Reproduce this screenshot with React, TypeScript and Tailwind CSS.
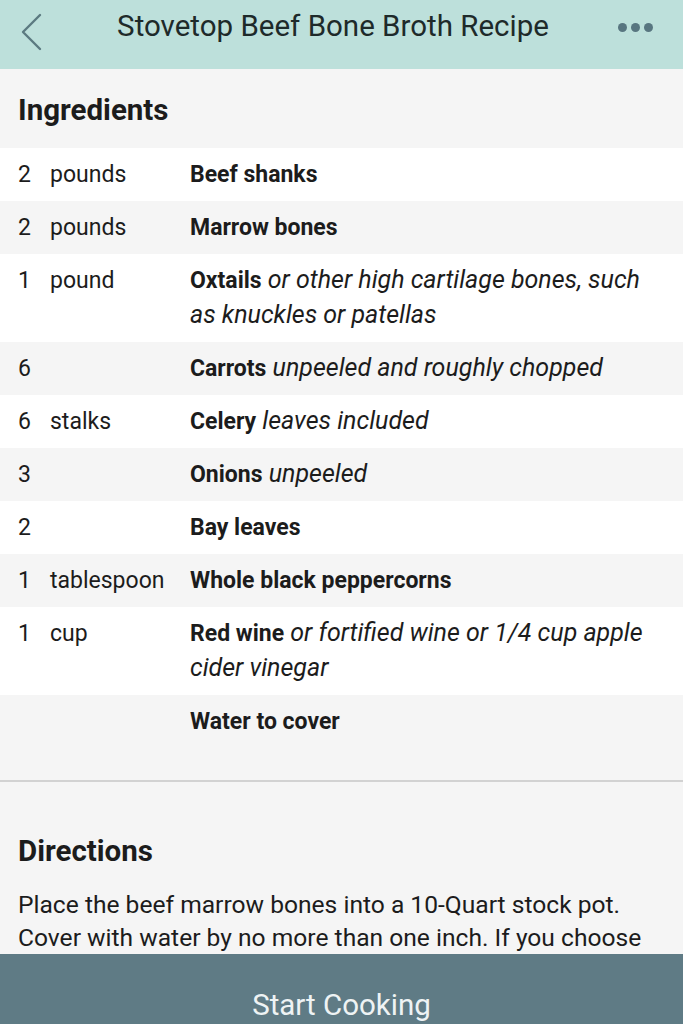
import React from "react";

const font = { fontFamily: '"Roboto", "Liberation Sans", sans-serif' };

type Row = { q: string; u: string; name: string; note?: string[] };

const rows: Row[] = [
  { q: "2", u: "pounds", name: "Beef shanks" },
  { q: "2", u: "pounds", name: "Marrow bones" },
  { q: "1", u: "pound", name: "Oxtails", note: ["or other high cartilage bones, such", "as knuckles or patellas"] },
  { q: "6", u: "", name: "Carrots", note: ["unpeeled and roughly chopped"] },
  { q: "6", u: "stalks", name: "Celery", note: ["leaves included"] },
  { q: "3", u: "", name: "Onions", note: ["unpeeled"] },
  { q: "2", u: "", name: "Bay leaves" },
  { q: "1", u: "tablespoon", name: "Whole black peppercorns" },
  { q: "1", u: "cup", name: "Red wine", note: ["or fortified wine or 1/4 cup apple", "cider vinegar"] },
  { q: "", u: "", name: "Water to cover" },
];

export default function App() {
  return (
    <div className="flex h-[1024px] w-full flex-col overflow-hidden bg-[#f5f5f5] text-[#1c1c1c]" style={font}>
      <header className="flex h-[69px] shrink-0 items-center bg-[#bde0db] px-[18px]">
        <svg width="26" height="40" viewBox="0 0 26 40" className="shrink-0 -mt-[6px]">
          <path d="M22 3 L5 20 L22 37" fill="none" stroke="#5b7a80" strokeWidth="2.4" strokeLinecap="round" strokeLinejoin="round" />
        </svg>
        <h1 className="flex-1 whitespace-nowrap text-center text-[29.5px] leading-none text-[#1e2a2a] -mt-[16px] pl-[4px]">
          Stovetop Beef Bone Broth Recipe
        </h1>
        <div className="flex shrink-0 gap-[4px] pr-[12px] -mt-[14px]">
          <span className="h-[9px] w-[9px] rounded-full bg-[#587680]" />
          <span className="h-[9px] w-[9px] rounded-full bg-[#587680]" />
          <span className="h-[9px] w-[9px] rounded-full bg-[#587680]" />
        </div>
      </header>

      <main className="flex-1 overflow-hidden">
        <div className="flex h-[79px] items-center px-[18px]">
          <h2 className="mt-[4px] text-[29.5px] font-bold leading-none">Ingredients</h2>
        </div>
        <div>
          {rows.map((r, i) => (
            <div
              key={i}
              className={`flex py-[9px] text-[23px] leading-[35px] ${i % 2 === 0 ? "bg-white" : "bg-[#f5f5f5]"}`}
            >
              <div className="w-[50px] shrink-0 pl-[18px]">{r.q}</div>
              <div className="w-[140px] shrink-0">{r.u}</div>
              <div className="flex-1 whitespace-nowrap">
                <span className="font-bold">{r.name}</span>
                {r.note && (
                  <span className="text-[25px] leading-[25px] italic">
                    {" "}
                    {r.note[0]}
                    {r.note[1] && (
                      <>
                        <br />
                        {r.note[1]}
                      </>
                    )}
                  </span>
                )}
              </div>
            </div>
          ))}
        </div>
        <div className="h-[32px]" />
        <div className="h-[2px] bg-[#d2d2d2]" />
        <div className="px-[18px] pt-[52px]">
          <h2 className="text-[29.5px] font-bold leading-[34px]">Directions</h2>
          <p className="mt-[20px] whitespace-nowrap text-[24.6px] leading-[33px]">
            Place the beef marrow bones into a 10-Quart stock pot.
            <br />
            Cover with water by no more than one inch. If you choose
          </p>
        </div>
      </main>

      <footer className="flex h-[70px] shrink-0 items-end justify-center bg-[#5f7b85] pb-[2px]">
        <span className="text-[29.5px] leading-[34px] text-[#eef3f4]">Start Cooking</span>
      </footer>
    </div>
  );
}
